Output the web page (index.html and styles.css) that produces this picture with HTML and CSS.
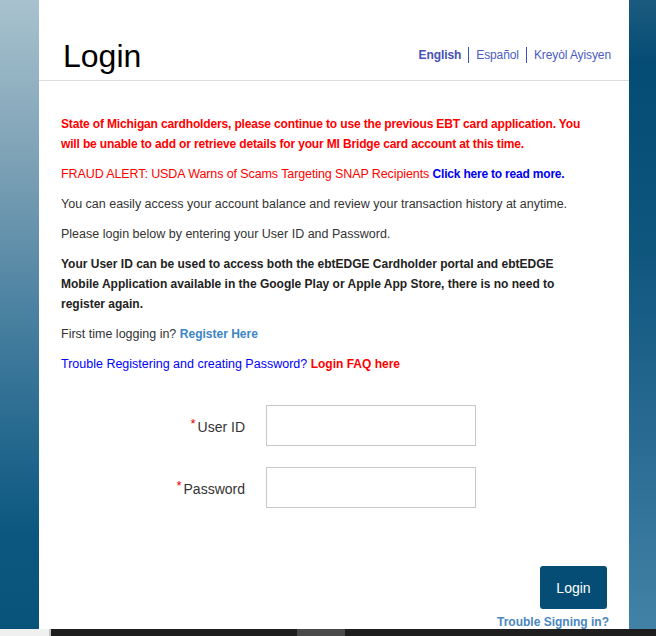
FILE: index.html
```html
<!DOCTYPE html>
<html lang="en">
<head>
    <meta charset="UTF-8">
    <meta name="viewport" content="width=device-width, initial-scale=1.0">
    <title>Login</title>
    <link rel="stylesheet" href="styles.css">
</head>
<body>

    <div class="screen">
        <div class="side side-left"></div>

        <div class="panel">
            <div class="panel-header">
                <h1>Login</h1>
                <nav class="lang-links">
                    <a href="#" class="active">English</a>
                    <a href="#">Español</a>
                    <a href="#">Kreyòl Ayisyen</a>
                </nav>
            </div>

            <div class="panel-body">
                <p class="notice">State of Michigan cardholders, please continue to use the previous EBT card application. You will be unable to add or retrieve details for your MI Bridge card account at this time.</p>
                <p class="fraud">FRAUD ALERT: USDA Warns of Scams Targeting SNAP Recipients <a href="#">Click here to read more.</a></p>
                <p>You can easily access your account balance and review your transaction history at anytime.</p>
                <p>Please login below by entering your User ID and Password.</p>
                <p class="strong">Your User ID can be used to access both the ebtEDGE Cardholder portal and ebtEDGE Mobile Application available in the Google Play or Apple App Store, there is no need to register again.</p>
                <p>First time logging in? <a href="#" class="register">Register Here</a></p>
                <p class="trouble">Trouble Registering and creating Password? <a href="#">Login FAQ here</a></p>

                <form class="login-form">
                    <div class="form-row">
                        <label for="userid"><span class="req">*</span>User ID</label>
                        <input type="text" id="userid">
                    </div>
                    <div class="form-row">
                        <label for="password"><span class="req">*</span>Password</label>
                        <input type="password" id="password">
                    </div>
                    <div class="form-actions">
                        <button type="button">Login</button>
                        <a href="#" class="signin-help">Trouble Signing in?</a>
                    </div>
                </form>
            </div>
        </div>

        <div class="side side-right"></div>
    </div>

    <div class="taskbar">
        <div class="tb-start"></div>
        <div class="tb-item"></div>
    </div>

</body>
</html>
```

FILE: styles.css
```css
/* --- Global Setup --- */
body, html {
    margin: 0;
    padding: 0;
    height: 100%;
    width: 100%;
    overflow: hidden;
    font-family: 'Liberation Sans', Arial, sans-serif;
}

.screen {
    display: flex;
    height: 629px;
}

.side { flex: none; }
.side-left {
    width: 39px;
    background: linear-gradient(to bottom, #a8c2ce 0%, #7ea2b6 25%, #3f7a9c 55%, #0b5780 85%, #085479 100%);
}
.side-right {
    width: 27px;
    background: linear-gradient(to bottom, #1c5b7f 0%, #054c74 10%, #0f567d 40%, #2a6b93 70%, #4282a6 100%);
}

/* --- Panel --- */
.panel {
    flex: none;
    width: 590px;
    background: #fff;
    overflow: hidden;
}

.panel-header {
    display: flex;
    justify-content: space-between;
    align-items: flex-start;
    height: 80px;
    padding: 0 18px 0 24px;
    border-bottom: 1px solid #ddd;
}
.panel-header h1 {
    margin: 38px 0 0 0;
    font-size: 32px;
    line-height: 36px;
    font-weight: normal;
    color: #000;
}

.lang-links {
    display: flex;
    align-items: center;
    margin-top: 47px;
}
.lang-links a {
    font-size: 12px;
    color: #4b5cc4;
    text-decoration: none;
    padding: 0 7px;
    line-height: 16px;
    letter-spacing: -0.1px;
    border-left: 1px solid #3f51b5;
}
.lang-links a:first-child { border-left: none; }
.lang-links a:last-child { padding-right: 0; }
.lang-links a.active { font-weight: bold; color: #4652b5; }

.panel-body {
    padding: 33px 22px 0 22px;
}
.panel-body p {
    margin: 0 18px 10px 0;
    font-size: 12.5px;
    line-height: 20px;
    color: #333;
}
.panel-body p.notice { color: #ff0000; font-weight: bold; font-size: 12px; letter-spacing: -0.15px; }
.panel-body p.fraud { color: #ff0000; font-size: 12.5px; letter-spacing: -0.1px; }
.panel-body p.fraud a { color: #0000ee; font-weight: bold; font-size: 12px; letter-spacing: -0.2px; text-decoration: none; }
.panel-body p.strong { font-weight: bold; color: #222; font-size: 12px; }
.panel-body a.register { color: #3d85c6; font-weight: bold; font-size: 12px; text-decoration: none; }
.panel-body p.trouble { color: #0000ff; }
.panel-body p.trouble a { color: #ff0000; font-weight: bold; font-size: 12px; text-decoration: none; }

/* --- Form --- */
.login-form {
    margin-top: 31px;
    display: flex;
    flex-direction: column;
    gap: 21px;
}
.form-row {
    display: flex;
    align-items: center;
    gap: 21px;
}
.form-row label {
    width: 184px;
    text-align: right;
    font-size: 14px;
    color: #333;
}
.req {
    color: #e00000;
    font-size: 13px;
    vertical-align: 4px;
    margin-right: 2px;
}
.form-row input {
    margin: 0;
    padding: 0 8px;
    box-sizing: border-box;
    width: 210px;
    height: 41px;
    border: 1px solid #c8c8c8;
    border-radius: 0;
    font-size: 14px;
}

.form-actions {
    display: flex;
    flex-direction: column;
    align-items: flex-end;
    margin-top: 37px;
    gap: 5px;
}
.form-actions button {
    width: 67px;
    height: 43px;
    background: #054d75;
    color: #fff;
    border: none;
    border-radius: 3px;
    font-family: inherit;
    font-size: 14px;
    cursor: pointer;
}
.signin-help {
    color: #4a86c0;
    font-size: 12px;
    line-height: 16px;
    font-weight: bold;
    text-decoration: none;
    margin-right: -2px;
}

/* --- Bottom bar --- */
.taskbar {
    display: flex;
    height: 7px;
    background: #1e1e1e;
}
.tb-start {
    width: 49px;
    background: #f0f0f0;
    border-right: 2px solid #c4c4c4;
}
.tb-item {
    width: 48px;
    margin-left: 246px;
    background: #4a4a4a;
}
```
